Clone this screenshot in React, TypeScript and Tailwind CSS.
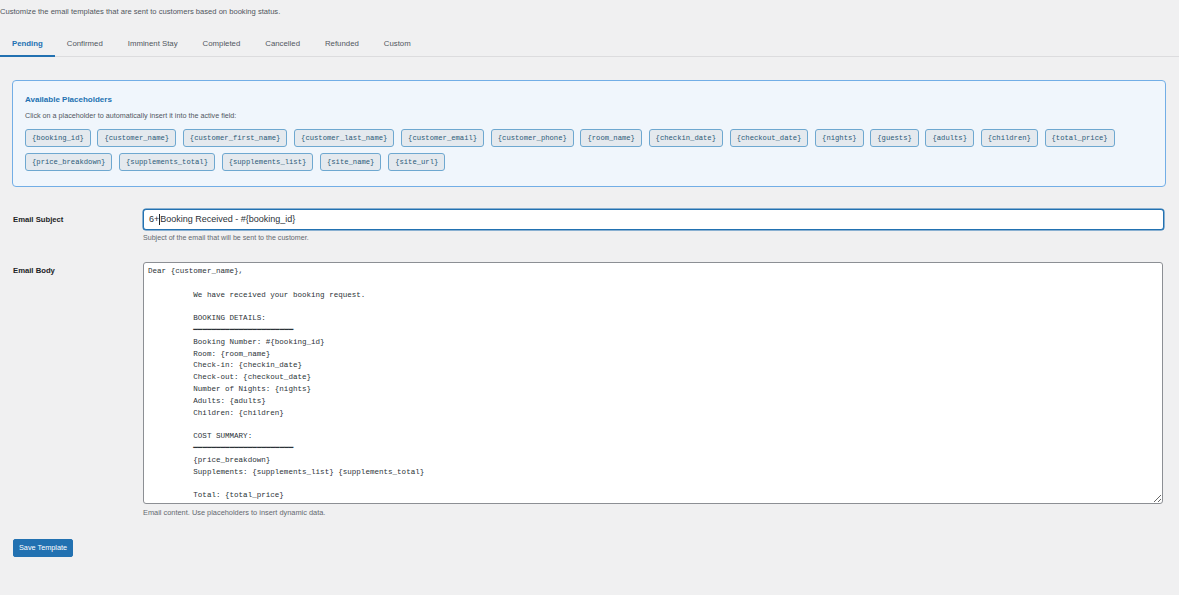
import { useState } from 'react';

const tabs = ['Pending', 'Confirmed', 'Imminent Stay', 'Completed', 'Cancelled', 'Refunded', 'Custom'];

const placeholders = [
    '{booking_id}', '{customer_name}', '{customer_first_name}', '{customer_last_name}',
    '{customer_email}', '{customer_phone}', '{room_name}', '{checkin_date}', '{checkout_date}',
    '{nights}', '{guests}', '{adults}', '{children}', '{total_price}',
    '{price_breakdown}', '{supplements_total}', '{supplements_list}', '{site_name}', '{site_url}',
];

const ind = '          ';
const rule = '━━━━━━━━━━━━━━━━━━━━━━';

const bodyText = [
    'Dear {customer_name},',
    '',
    ind + 'We have received your booking request.',
    '',
    ind + 'BOOKING DETAILS:',
    ind + rule,
    ind + 'Booking Number: #{booking_id}',
    ind + 'Room: {room_name}',
    ind + 'Check-in: {checkin_date}',
    ind + 'Check-out: {checkout_date}',
    ind + 'Number of Nights: {nights}',
    ind + 'Adults: {adults}',
    ind + 'Children: {children}',
    '',
    ind + 'COST SUMMARY:',
    ind + rule,
    ind + '{price_breakdown}',
    ind + 'Supplements: {supplements_list} {supplements_total}',
    '',
    ind + 'Total: {total_price}',
].join('\n');

export default function App() {
    const [active, setActive] = useState('Pending');
    const [body, setBody] = useState(bodyText);

    return (
        <div className="min-h-screen bg-[#f0f0f1] text-[#1d2327] font-['Liberation_Sans',Arial,sans-serif]">
            {/* Intro */}
            <p className="pt-[7px] h-[29px] text-[7.6px] leading-[10px] text-[#50575e]">
                Customize the email templates that are sent to customers based on booking status.
            </p>

            {/* Tabs */}
            <div className="flex h-[28px] border-b border-[#dcdcde]">
                {tabs.map((tab) => (
                    <button
                        key={tab}
                        onClick={() => setActive(tab)}
                        className={`mr-[-1px] text-[7.8px] leading-[10px] pt-[3px] border-b-2 mb-[-1px] ${
                            active === tab
                                ? 'px-[12px] border-[#2271b1] text-[#2271b1] font-semibold'
                                : 'px-[13px] border-transparent text-[#50575e]'
                        }`}
                    >
                        {tab}
                    </button>
                ))}
            </div>

            {/* Placeholders */}
            <div className="mt-[23px] ml-[12px] mr-[13px] h-[107px] rounded-[4px] border border-[#72aee6] bg-[#f0f6fc] px-[12px] pt-[13px]">
                <h3 className="text-[8px] leading-[12px] font-bold text-[#2271b1]">Available Placeholders</h3>
                <p className="mt-[5px] text-[7.2px] leading-[10px] text-[#50575e]">
                    Click on a placeholder to automatically insert it into the active field:
                </p>
                <div className="mt-[8px] flex flex-wrap gap-x-[6.7px] gap-y-[6px]">
                    {placeholders.map((p) => (
                        <button
                            key={p}
                            className="h-[18px] flex items-center px-[6px] rounded-[3px] border-[1.5px] border-[#6ea8d0] bg-[#e4e9ee] text-[#2c5a78] text-[7.2px] font-['Liberation_Mono',monospace]"
                        >
                            {p}
                        </button>
                    ))}
                </div>
            </div>

            {/* Subject */}
            <div className="mt-[22px] flex">
                <label className="w-[143px] pl-[13px] pt-[6px] text-[7.7px] font-bold leading-[10px]">Email Subject</label>
                <div className="w-[1021px]">
                    <div
                        role="textbox"
                        className="h-[21px] flex items-center rounded-[3px] border border-[#2271b1] shadow-[0_0_0_0.5px_#2271b1] bg-white px-[5px] text-[9px] text-[#2c3338]"
                    >
                        6+<span className="inline-block w-px h-[11px] bg-[#1d2327]" />Booking Received - #{'{booking_id}'}
                    </div>
                    <p className="mt-[3px] text-[7.1px] leading-[10px] text-[#646970]">
                        Subject of the email that will be sent to the customer.
                    </p>
                </div>
            </div>

            {/* Body */}
            <div className="mt-[19px] flex">
                <label className="w-[143px] pl-[13px] pt-[4px] text-[7.7px] font-bold leading-[10px]">Email Body</label>
                <div className="w-[1020px]">
                    <textarea
                        value={body}
                        onChange={(e) => setBody(e.target.value)}
                        className="block w-full h-[242px] rounded-[3px] border border-[#8c8f94] bg-white px-[4px] pt-[3px] text-[7.55px] leading-[11.8px] text-[#2c3338] font-['Liberation_Mono',monospace] outline-none overflow-hidden"
                    />
                    <p className="mt-[4px] text-[7.4px] leading-[10px] text-[#646970]">
                        Email content. Use placeholders to insert dynamic data.
                    </p>
                </div>
            </div>

            {/* Save */}
            <div className="mt-[15px] pl-[13px]">
                <button className="h-[18px] px-[5px] rounded-[2px] bg-[#2271b1] border border-[#2271b1] text-white text-[7.3px]">
                    Save Template
                </button>
            </div>
        </div>
    );
}
